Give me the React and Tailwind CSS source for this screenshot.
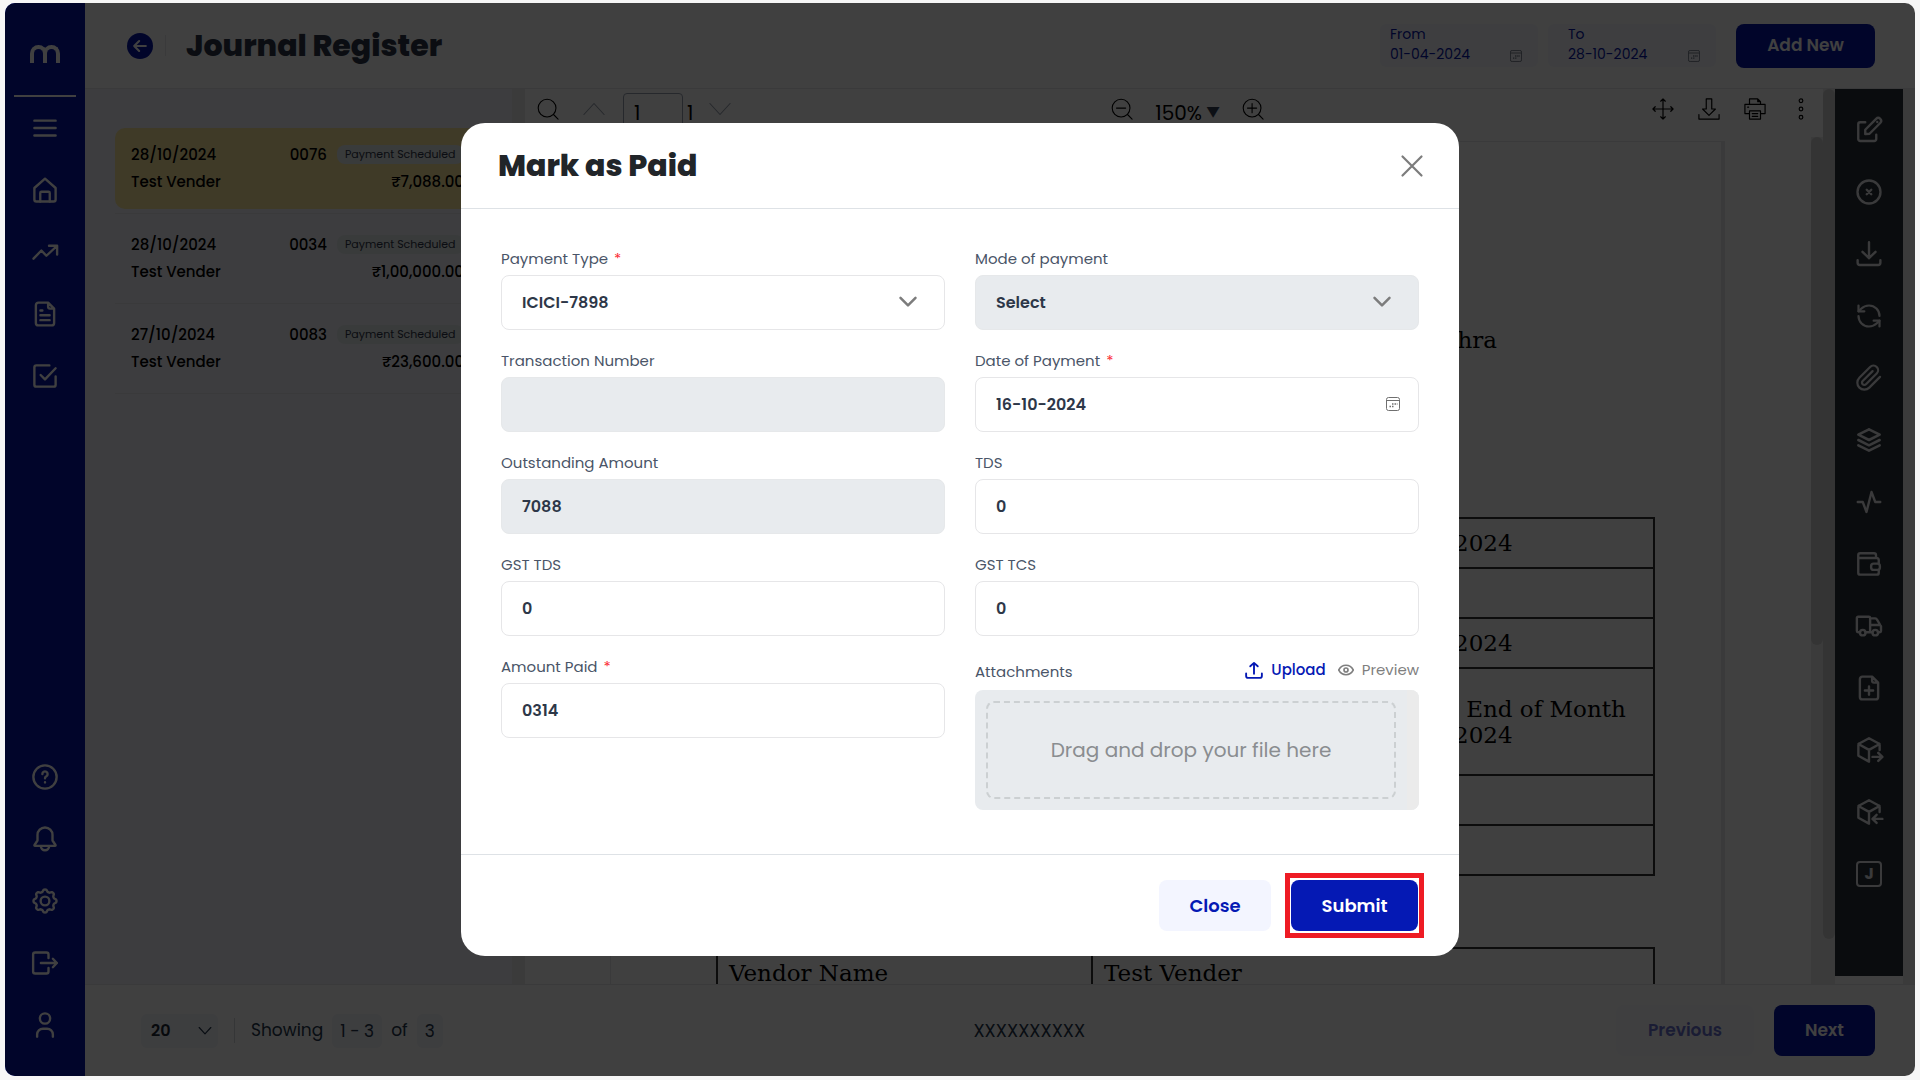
import { useState } from "react";
import { FiPaperclip } from "react-icons/fi";
import { TbActivity, TbStack2 } from "react-icons/tb";
import { RefreshCcw } from "lucide-react";

// Stroke icon on a 24px grid
function Icon({ children, className = "size-[30px]", width = 1.9 }) {
  return (
    <svg
      viewBox="0 0 24 24"
      className={className}
      fill="none"
      stroke="currentColor"
      strokeWidth={width}
      strokeLinecap="round"
      strokeLinejoin="round"
      aria-hidden="true"
    >
      {children}
    </svg>
  );
}

const FILE_PATH = "M14.5 2.9H6.7a2 2 0 0 0-2 2v14.2a2 2 0 0 0 2 2h10.6a2 2 0 0 0 2-2V7.7zM14.5 2.9v3.3a1.5 1.5 0 0 0 1.5 1.5h3.3";
const CUBE_PATH = "M20.5 12V7.2L12 2.6 3.5 7.2v9.4L12 21.3M3.5 7.2 12 11.9l8.5-4.7M12 11.9v9.4";

// Outline of a cog with eight soft teeth
const GEAR_POINTS = Array.from({ length: 96 }, (_, i) => {
  const angle = (i / 96) * Math.PI * 2;
  const wave = Math.cos(angle * 8);
  const r = 8.3 + Math.sign(wave) * Math.sqrt(Math.abs(wave)) * 0.9;
  return `${(12 + r * Math.sin(angle)).toFixed(2)},${(12 - r * Math.cos(angle)).toFixed(2)}`;
}).join(" ");

const topNav = [
  { label: "Menu", icon: <Icon><path d="M3.5 6.1h17M3.5 12h17M3.5 18h17" /></Icon> },
  {
    label: "Home",
    icon: (
      <Icon>
        <path d="M3.5 10.4 12 2.9l8.5 7.5v9.2a1.6 1.6 0 0 1-1.6 1.6H5.1a1.6 1.6 0 0 1-1.6-1.6z" />
        <path d="M8.2 21.2v-6.8a1 1 0 0 1 1-1h5.6a1 1 0 0 1 1 1v6.8" />
      </Icon>
    ),
  },
  { label: "Trends", icon: <Icon><path d="m2.8 17.3 6.3-6.5 4 4.2 8.4-7.8M15.2 7h6.5v7" /></Icon> },
  { label: "Documents", icon: <Icon><path d={FILE_PATH} /><path d="M8.3 9.2h1.6M8.3 13h7.4M8.3 16.9h7.4" /></Icon> },
  {
    label: "Tasks",
    icon: (
      <Icon>
        <path d="M20.5 12.4v6.5a1.6 1.6 0 0 1-1.6 1.6H5.1a1.6 1.6 0 0 1-1.6-1.6V5.1a1.6 1.6 0 0 1 1.6-1.6h10.4" />
        <path d="m8.5 11.2 3.5 3.5 8.5-8.9" />
      </Icon>
    ),
  },
];

const bottomNav = [
  {
    label: "Help",
    icon: (
      <Icon>
        <circle cx="12" cy="12" r="9.3" />
        <path d="M9.9 9.6a2.1 2.1 0 1 1 3.2 1.8c-.7.4-1.1.8-1.1 1.6M12 16.2v.1" />
      </Icon>
    ),
  },
  {
    label: "Notifications",
    icon: (
      <Icon>
        <path d="M12 2.8a6 6 0 0 0-6 6v4.4l-2.4 3.6c-.2.4 0 .7.4.7h16c.4 0 .6-.3.4-.7L18 13.2V8.8a6 6 0 0 0-6-6z" />
        <path d="M8.7 17.7a3.3 3.3 0 0 0 6.6 0" />
      </Icon>
    ),
  },
  { label: "Settings", icon: <Icon><polygon points={GEAR_POINTS} /><circle cx="12" cy="12" r="3.5" /></Icon> },
  {
    label: "Log out",
    icon: (
      <Icon>
        <path d="M14.8 8V5.2a1.6 1.6 0 0 0-1.6-1.6H4.1a1.6 1.6 0 0 0-1.6 1.6v13.6a1.6 1.6 0 0 0 1.6 1.6h9.1a1.6 1.6 0 0 0 1.6-1.6V16" />
        <path d="M8.7 12h12.8M18.3 8.6l3.2 3.4-3.2 3.4" />
      </Icon>
    ),
  },
  {
    label: "Profile",
    icon: <Icon><circle cx="12" cy="6.8" r="4.1" /><path d="M5.7 21.3v-1.7a4.6 4.6 0 0 1 4.6-4.6h3.4a4.6 4.6 0 0 1 4.6 4.6v1.7" /></Icon>,
  },
];

const actions = [
  {
    label: "Edit",
    icon: (
      <Icon>
        <path d="M9 5.8H5a1.6 1.6 0 0 0-1.6 1.6v11.8A1.6 1.6 0 0 0 5 20.8h11.2a1.6 1.6 0 0 0 1.6-1.6v-3.5" />
        <path d="M9 15.3v-3.5l8.7-8.7a2.3 2.3 0 0 1 3.3 3.3L12.4 15zM18.6 5.5v.1" />
      </Icon>
    ),
  },
  { label: "Cancel", icon: <Icon><circle cx="12" cy="12" r="9.2" /><path d="m10.2 10.2 3.6 3.6M13.8 10.2l-3.6 3.6" /></Icon> },
  {
    label: "Download",
    icon: <Icon><path d="M12 2.5v12.8M6.8 10.3l5.2 5 5.2-5M2.9 17v2a1.8 1.8 0 0 0 1.8 1.8h14.6a1.8 1.8 0 0 0 1.8-1.8v-2" /></Icon>,
  },
  { label: "Refresh", icon: <RefreshCcw size={28} strokeWidth={1.9} /> },
  { label: "Attach", icon: <FiPaperclip size={28} strokeWidth={1.9} /> },
  { label: "Layers", icon: <TbStack2 size={32} strokeWidth={1.9} /> },
  { label: "Activity", icon: <TbActivity size={30} strokeWidth={1.9} /> },
  {
    label: "Wallet",
    icon: (
      <Icon>
        <path d="M3.4 7.2v11.7a1.6 1.6 0 0 0 1.6 1.6h13.2a1.6 1.6 0 0 0 1.6-1.6v-2.2M19.8 11.7V8.8a1.6 1.6 0 0 0-1.6-1.6H3.4V5a1.6 1.6 0 0 1 1.6-1.6h11a1.6 1.6 0 0 1 1.6 1.6v2.2" />
        <rect x="13.7" y="11.7" width="7" height="5" rx="2" />
      </Icon>
    ),
  },
  {
    label: "Delivery",
    icon: (
      <Icon>
        <path d="M4.7 17H3.3a1 1 0 0 1-1-1V5.6a1 1 0 0 1 1-1h8.6a1 1 0 0 1 1 1V17H9.3M12.9 5.9h4a1.6 1.6 0 0 1 1.5 1l3.2 5.3v3.8a1 1 0 0 1-1 1h-1.3M12.9 17h1.8M12.9 11.2h8" />
        <circle cx="7" cy="17.3" r="2.2" />
        <circle cx="17" cy="17.3" r="2.2" />
      </Icon>
    ),
  },
  { label: "New document", icon: <Icon><path d={FILE_PATH} /><path d="M12 10.7v6.6M8.7 14h6.6" /></Icon> },
  { label: "Export package", icon: <Icon><path d={CUBE_PATH} /><path d="M14.8 17.5h7.9M19.4 14.3l3.3 3.2-3.3 3.2" /></Icon> },
  { label: "Import package", icon: <Icon><path d={CUBE_PATH} /><path d="M14.8 17.5h7.9M18.1 14.3l-3.3 3.2 3.3 3.2" /></Icon> },
  {
    label: "Journal",
    icon: <span className="flex size-[26px] items-center justify-center rounded border-2 border-current text-base font-bold">J</span>,
  },
];

const entries = [
  { date: "28/10/2024", number: "0076", amount: "₹7,088.00", active: true },
  { date: "28/10/2024", number: "0034", amount: "₹1,00,000.00" },
  { date: "27/10/2024", number: "0083", amount: "₹23,600.00" },
];

function CalendarIcon({ className }) {
  return (
    <svg viewBox="0 0 14 14" className={className} fill="none" stroke="currentColor" aria-hidden="true">
      <rect x="0.5" y="0.5" width="13" height="13" rx="2" />
      <path d="M0.5 3.5h13" />
      <path d="M6 7h1.5M8.5 7h1.5M3.5 9.500h1.5M6 9.500h1.500M10.800 7h.7" strokeWidth="1.5" />
    </svg>
  );
}

function Sidebar() {
  return (
    <nav className="flex w-20 shrink-0 flex-col items-center bg-[#0515a8] text-white">
      <div className="flex pt-[42px] pb-8" role="img" aria-label="Logo">
        <span className="h-[18px] w-[17px] rounded-t-full border-4 border-b-0 border-current" />
        <span className="-ml-1 h-[18px] w-[17px] rounded-t-full border-4 border-b-0 border-current" />
      </div>
      <div className="h-[2px] w-[62px] bg-current" />
      <ul className="flex flex-col">
        {topNav.map((item) => (
          <li key={item.label}>
            <button type="button" aria-label={item.label} className="flex h-[62px] items-center">{item.icon}</button>
          </li>
        ))}
      </ul>
      <ul className="mt-auto mb-5 flex flex-col">
        {bottomNav.map((item) => (
          <li key={item.label}>
            <button type="button" aria-label={item.label} className="flex h-[62px] items-center">{item.icon}</button>
          </li>
        ))}
      </ul>
    </nav>
  );
}

function DateFilter({ id, label, value, className }) {
  return (
    <div className={`flex h-[43px] items-center rounded-md bg-[#f6f8fd] pb-1 text-[#0515a8] ${className}`}>
      <div className="flex min-w-0 flex-1 flex-col">
        <label htmlFor={id} className="text-sm leading-5">{label}</label>
        <input id={id} defaultValue={value} className="w-full text-sm leading-5 outline-none" />
      </div>
      <CalendarIcon className="mt-6 size-3 text-gray-500" />
    </div>
  );
}

function Header() {
  return (
    <header className="flex h-[86px] shrink-0 items-center border-b border-gray-200 bg-white pr-10 pl-[42px]">
      <button type="button" aria-label="Back" className="flex size-[26px] items-center justify-center rounded-full bg-[#0515a8] text-white">
        <Icon className="size-5" width={2.5}><path d="M5 12h14M11 6l-6 6 6 6" /></Icon>
      </button>
      <div className="ml-3 h-[21px] w-px bg-gray-200" />
      <h1 className="ml-5 text-3xl font-extrabold text-[#2d3748]">Journal Register</h1>
      <div className="ml-auto flex items-center">
        <DateFilter id="from" label="From" value="01-04-2024" className="w-[158px] pr-4 pl-[10px]" />
        <DateFilter id="to" label="To" value="28-10-2024" className="ml-[10px] w-[168px] pr-4 pl-5" />
        <button type="button" className="ml-5 h-[44px] w-[139px] rounded-lg bg-[#0515a8] text-[17px] font-semibold text-white">
          Add New
        </button>
      </div>
    </header>
  );
}

function EntryList() {
  return (
    <section className="w-[427px] shrink-0 bg-[#f4f4f9] pt-[39px] pr-6 pl-[30px]">
      <ul>
        {entries.map((entry) => (
          <li key={entry.number} className="mb-1 border-b border-gray-200 pb-1">
            <div className={`h-[81px] rounded-[10px] pt-[13px] pr-6 pl-4 text-[15px] leading-[27px] font-medium text-black ${entry.active ? "bg-[#f9e69c]" : ""}`}>
              <div className="flex items-center">
                <span>{entry.date}</span>
                <span className="ml-auto">{entry.number}</span>
                <span className="ml-[10px] w-[127px] rounded-lg bg-[#e4e9ec] px-2 text-[11px] leading-[19px] font-normal whitespace-nowrap text-[#2d3748]">
                  Payment Scheduled
                </span>
              </div>
              <div className="flex justify-between">
                <span>Test Vender</span>
                <span>{entry.amount}</span>
              </div>
            </div>
          </li>
        ))}
      </ul>
    </section>
  );
}

function ToolButton({ label, children }) {
  return <button type="button" aria-label={label} className="pb-2">{children}</button>;
}

function ViewerToolbar() {
  return (
    <div className="flex h-12 shrink-0 items-center justify-between pr-[11px] pl-3 text-xl text-black">
      <div className="flex items-center">
        <ToolButton label="Search">
          <Icon className="size-[22px]" width={1.2}><circle cx="11" cy="11" r="9.7" /><path d="m18 18 5 5" /></Icon>
        </ToolButton>
        <span className="ml-6 text-gray-400">
          <ToolButton label="Previous page">
            <Icon className="size-[22px]" width={1.2}><path d="m1 18 11-12 11 12" /></Icon>
          </ToolButton>
        </span>
        <input aria-label="Page" defaultValue="1" className="ml-[18px] h-10 w-[60px] rounded border border-gray-400 px-[10px] outline-none" />
        <span className="ml-1">1</span>
        <span className="ml-4 text-gray-400">
          <ToolButton label="Next page">
            <Icon className="size-[22px]" width={1.2}><path d="m1 6 11 12L23 6" /></Icon>
          </ToolButton>
        </span>
      </div>
      <div className="mr-2 flex items-center gap-[22px]">
        <ToolButton label="Zoom out">
          <Icon className="size-[22px]" width={1.2}><circle cx="11" cy="11" r="9.7" /><path d="m18 18 5 5M6 11h10" /></Icon>
        </ToolButton>
        <button type="button" className="flex items-center gap-1 leading-7">
          150% <span className="text-sm text-gray-700">▼</span>
        </button>
        <ToolButton label="Zoom in">
          <Icon className="size-[22px]" width={1.2}><circle cx="11" cy="11" r="9.7" /><path d="m18 18 5 5M6 11h10M11 6v10" /></Icon>
        </ToolButton>
      </div>
      <div className="flex items-center gap-6">
        <ToolButton label="Pan">
          <Icon className="size-[22px]" width={1.3}><path d="M12 1v22M1 12h22M9.5 3.5 12 1l2.5 2.5M9.5 20.5 12 23l2.5-2.5M3.5 9.5 1 12l2.5 2.5M20.5 9.5 23 12l-2.5 2.5" /></Icon>
        </ToolButton>
        <ToolButton label="Download file">
          <Icon className="size-[22px]" width={1.3}><path d="M9 1h6v11h4l-7 7-7-7h4zM1 18v5h22v-5" /></Icon>
        </ToolButton>
        <ToolButton label="Print">
          <Icon className="size-[22px]" width={1.3}><path d="M6 7V1h9l3 3v3M6 17H1V7h22v10h-5M6 14h12v9H6zM9 17h6M9 20h6M4 10h1M15 1v3h3" /></Icon>
        </ToolButton>
        <ToolButton label="More">
          <Icon className="size-[22px]" width={1.3}><circle cx="12" cy="3" r="2" /><circle cx="12" cy="12" r="2" /><circle cx="12" cy="21" r="2" /></Icon>
        </ToolButton>
      </div>
    </div>
  );
}

const cell = "border-2 border-[#303030] px-[11px] py-0 font-normal text-left";

function DocumentPage() {
  return (
    <article className="mt-1 mr-[86px] ml-[85px] h-[1400px] border border-r-4 border-gray-200 pt-[185px] pr-[66px] pl-[105px] font-['DejaVu_Serif','Liberation_Serif',serif] text-[23px] leading-[26px] text-black">
      <p className="pr-[158px] text-right">Andhra</p>
      <table className="mt-[164px] w-full table-fixed border-collapse">
        <tbody>
          <tr className="h-[50px]"><th className={`w-[651px] ${cell}`}>Invoice Date</th><td className={cell}>28-10-2024</td></tr>
          <tr className="h-[50px]"><th className={cell}>Reference</th><td className={cell} /></tr>
          <tr className="h-[50px]"><th className={cell}>Due Date</th><td className={cell}>31-10-2024</td></tr>
          <tr className="h-[107px]"><th className={cell}>Payment Terms</th><td className={cell}>0 Days End of Month<br />31-10-2024</td></tr>
          <tr className="h-[50px]"><th className={cell}>Currency</th><td className={cell} /></tr>
          <tr className="h-[50px]"><th className={cell}>Notes</th><td className={cell} /></tr>
        </tbody>
      </table>
      <table className="mt-[71px] w-full table-fixed border-collapse">
        <tbody>
          <tr className="h-[50px]"><th className={`w-[375px] ${cell}`}>Vendor Name</th><td className={cell}>Test Vender</td></tr>
        </tbody>
      </table>
    </article>
  );
}

function Viewer() {
  return (
    <>
      <div className="w-[13px] shrink-0 bg-[#ececec]" />
      <section className="flex min-w-0 flex-1 flex-col bg-white">
        <ViewerToolbar />
        <div className="flex min-h-0 flex-1">
          <div className="min-w-0 flex-1 overflow-hidden"><DocumentPage /></div>
          <div className="w-3 bg-[#ebebeb]"><div className="h-[60%] rounded-full bg-[#cfcfcf]" /></div>
        </div>
      </section>
      <div className="w-3 shrink-0 bg-[#ebebeb]"><div className="h-[95%] rounded-full bg-[#cfcfcf]" /></div>
      <aside className="mb-2 flex w-[68px] shrink-0 flex-col items-center bg-[#2b3338] pt-[10px] text-gray-200">
        {actions.map((action) => (
          <button key={action.label} type="button" aria-label={action.label} className="flex h-[62px] items-center">
            {action.icon}
          </button>
        ))}
      </aside>
      <div className="w-3 shrink-0 bg-[#ebebeb]" />
    </>
  );
}

function Footer() {
  return (
    <footer className="flex h-[92px] shrink-0 items-center justify-between border-t border-gray-200 bg-white pr-10 pl-14 text-[17px] text-[#24364b]">
      <div className="flex items-center">
        <div className="relative flex">
          <select aria-label="Rows per page" defaultValue="20" className="h-[34px] w-[77px] appearance-none rounded-md bg-[#f3f5fb] pl-[10px] text-base font-semibold text-[#1f2937]">
            <option>20</option>
            <option>50</option>
          </select>
          <Icon className="pointer-events-none absolute top-[10px] right-[6px] size-[14px]" width={2}><path d="m2 6 10 11L22 6" /></Icon>
        </div>
        <div className="mx-4 h-[25px] w-px bg-gray-300" />
        <span>Showing</span>
        <span className="mx-[9px] rounded-md bg-[#f3f5fb] px-2 leading-[34px]">1 - 3</span>
        <span>of</span>
        <span className="ml-[9px] rounded-md bg-[#f3f5fb] px-2 leading-[34px]">3</span>
      </div>
      <p className="text-lg">XXXXXXXXXX</p>
      <div className="flex gap-5 font-semibold">
        <button type="button" disabled className="h-[51px] w-[138px] rounded-lg bg-[#fafbfe] text-[#6a72cd]">Previous</button>
        <button type="button" className="h-[51px] w-[101px] rounded-lg bg-[#0515a8] text-white">Next</button>
      </div>
    </footer>
  );
}

const controlBase = "h-[55px] w-full rounded-lg border px-5 text-base font-semibold text-[#2d3748] outline-none";
const enabledControl = "border-[#e6e6e8] bg-white";
const disabledControl = "border-[#e6e8ea] bg-[#e8ebee] opacity-100";

function Field({ id, label, required, disabled, options, value, onChange, calendar }) {
  const className = `${controlBase} ${disabled ? disabledControl : enabledControl}`;
  return (
    <div className="mb-[21px]">
      <label htmlFor={id} className="mb-[6px] block text-[15px] leading-5 text-[#4a5568]">
        {label}
        {required && <span className="ml-[6px] text-red-500">*</span>}
      </label>
      <div className="relative">
        {options ? (
          <select id={id} value={value} onChange={onChange} disabled={disabled} className={`appearance-none ${className}`}>
            {options.map((option) => <option key={option}>{option}</option>)}
          </select>
        ) : (
          <input id={id} value={value} onChange={onChange} disabled={disabled} className={className} />
        )}
        {options && (
          <Icon className="pointer-events-none absolute top-[17px] right-[27px] size-5 text-[#7c7c7c]" width={3}>
            <path d="m3 7 9 9 9-9" />
          </Icon>
        )}
        {calendar && <CalendarIcon className="pointer-events-none absolute top-5 right-[19px] size-[14px] text-[#6f6f6f]" />}
      </div>
    </div>
  );
}

function MarkAsPaidModal() {
  const [form, setForm] = useState({
    paymentType: "ICICI-7898",
    mode: "Select",
    transactionNumber: "",
    paymentDate: "16-10-2024",
    outstanding: "7088",
    tds: "0",
    gstTds: "0",
    gstTcs: "0",
    amountPaid: "0314",
  });

  const bind = (name) => ({
    id: name,
    value: form[name],
    onChange: (e) => setForm((prev) => ({ ...prev, [name]: e.target.value })),
  });

  return (
    <div role="dialog" aria-modal="true" aria-labelledby="modal-title" className="w-full max-w-[998px] rounded-3xl bg-white">
      {/* Title */}
      <div className="flex h-[86px] items-center justify-between border-b border-[#dee2e6] pr-[35px] pl-[37px]">
        <h2 id="modal-title" className="text-3xl font-extrabold text-[#212529]">Mark as Paid</h2>
        <button type="button" aria-label="Close dialog" className="text-[#7c7c7c]">
          <Icon className="size-6" width={2.2}><path d="m2.5 2.5 19 19M21.5 2.5l-19 19" /></Icon>
        </button>
      </div>

      {/* Fields */}
      <form id="payment-form" onSubmit={(e) => e.preventDefault()} className="grid grid-cols-2 gap-x-[30px] px-10 pt-10 pb-[23px]">
        <Field {...bind("paymentType")} label="Payment Type" required options={["ICICI-7898"]} />
        <Field {...bind("mode")} label="Mode of payment" disabled options={["Select"]} />
        <Field {...bind("transactionNumber")} label="Transaction Number" disabled />
        <Field {...bind("paymentDate")} label="Date of Payment" required calendar />
        <Field {...bind("outstanding")} label="Outstanding Amount" disabled />
        <Field {...bind("tds")} label="TDS" />
        <Field {...bind("gstTds")} label="GST TDS" />
        <Field {...bind("gstTcs")} label="GST TCS" />
        <Field {...bind("amountPaid")} label="Amount Paid" required />
        <div className="mb-[21px] pt-px">
          <div className="flex items-center text-[15px] leading-5 text-[#4a5568]">
            <span className="mt-1">Attachments</span>
            <button type="button" className="ml-auto flex items-center gap-2 font-medium text-[#0519b4]">
              <Icon className="size-[18px]" width={2.5}>
                <path d="M12 17V2.5M7 7l5-4.5L17 7M1.5 16.5V20a2.5 2.5 0 0 0 2.5 2.5h16a2.5 2.5 0 0 0 2.5-2.5v-3.5" />
              </Icon>
              Upload
            </button>
            <button type="button" className="ml-3 flex items-center gap-2 text-[#7f7f7f]">
              <Icon className="size-4" width={2.5}>
                <path d="M1 12c5-9.5 17-9.5 22 0-5 9.5-17 9.5-22 0z" />
                <circle cx="12" cy="12" r="3" />
              </Icon>
              Preview
            </button>
          </div>
          <div className="mt-2 flex h-[120px] overflow-hidden rounded-lg bg-[#e8ebee]">
            <div className="m-[11px] flex flex-1 items-center justify-center rounded-lg border-2 border-dashed border-[#ccd0d2] text-xl text-[#8a8d90]">
              Drag and drop your file here
            </div>
            <div className="w-3 bg-[#ebebeb]" />
          </div>
        </div>
      </form>

      {/* Buttons */}
      <div className="flex items-center justify-end gap-[14px] border-t border-[#dee2e6] pt-[18px] pr-[35px] pb-[18px] text-lg font-semibold">
        <button type="button" className="h-[51px] w-[112px] rounded-lg bg-[#f3f5ff] text-[#0519b4]">Close</button>
        <div className="border-[5px] border-[#ee1b24] p-px py-[2px]">
          <button type="submit" form="payment-form" className="block h-[51px] w-[127px] rounded-lg bg-[#0519b4] text-white">
            Submit
          </button>
        </div>
      </div>
    </div>
  );
}

export default function App() {
  return (
    <div className="h-screen bg-[#f6f6f6] px-[5px] pt-[3px] pb-1 font-['Poppins','Inter','Liberation_Sans',sans-serif] [font-feature-settings:'cv11']">
      <div className="relative flex h-full overflow-hidden rounded-[10px] bg-white">
        <Sidebar />
        <main className="flex min-w-0 flex-1 flex-col">
          <Header />
          <div className="flex min-h-0 flex-1">
            <EntryList />
            <Viewer />
          </div>
          <Footer />
        </main>

        {/* Backdrop */}
        <div className="absolute inset-0 flex items-center justify-center bg-black/75">
          <MarkAsPaidModal />
        </div>
      </div>
    </div>
  );
}
